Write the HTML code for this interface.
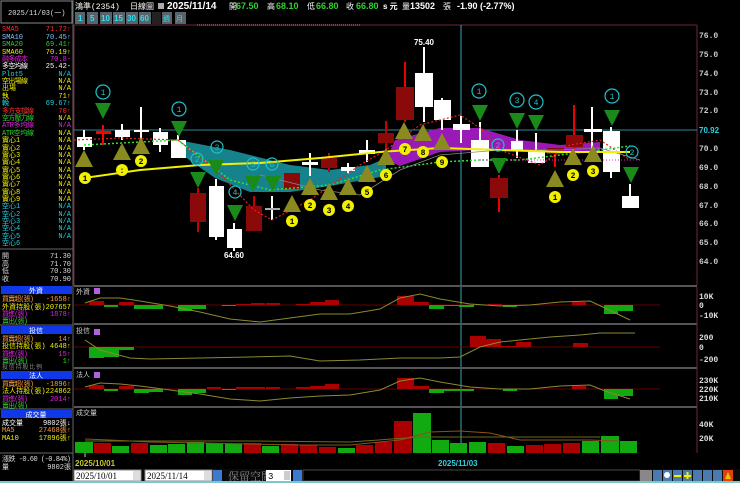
<!DOCTYPE html>
<html><head><meta charset="utf-8"><style>
html,body{margin:0;padding:0;background:#000;width:740px;height:483px;overflow:hidden}
svg{display:block}
text{font-family:"Liberation Mono","Noto Sans CJK TC",monospace;font-size:8px}
.b{font-family:"Liberation Sans","Noto Sans CJK TC",sans-serif;font-weight:bold}
.l text{font-size:7px}
</style></head><body>
<svg width="740" height="483" viewBox="0 0 740 483" xmlns="http://www.w3.org/2000/svg">
<rect width="740" height="483" fill="#000"/>
<!-- left panel -->
<rect x="1" y="1" width="71" height="22" fill="#000" stroke="#888" stroke-width="1"/>
<text x="8" y="15" fill="#ddd" style="font-size:7px">2025/11/03(一)</text>
<line x1="73" y1="0" x2="73" y2="483" stroke="#666"/>
<g class="l">
<text x="2" y="31" fill="#ff3030">SMA5</text><text x="71" y="31" fill="#ff3030" text-anchor="end">71.72↑</text>
<text x="2" y="39" fill="#7fc8ff">SMA10</text><text x="71" y="39" fill="#7fc8ff" text-anchor="end">70.45↑</text>
<text x="2" y="46" fill="#30d030">SMA20</text><text x="71" y="46" fill="#30d030" text-anchor="end">69.41↑</text>
<text x="2" y="54" fill="#f0f000">SMA60</text><text x="71" y="54" fill="#f0f000" text-anchor="end">70.19↑</text>
<text x="2" y="61" fill="#e020e0" textLength="26">融多成本</text><text x="71" y="61" fill="#e020e0" text-anchor="end">70.8-</text>
<text x="2" y="68" fill="#fff" textLength="26">多空均線</text><text x="71" y="68" fill="#fff" text-anchor="end">25.42-</text>
<text x="2" y="76" fill="#20d0e0">Plot5</text><text x="71" y="76" fill="#20d0e0" text-anchor="end">N/A</text>
<text x="2" y="83" fill="#f0f000" textLength="26">空出場線</text><text x="71" y="83" fill="#f0f000" text-anchor="end">N/A</text>
<text x="2" y="90" fill="#f0f000">出場</text><text x="71" y="90" fill="#f0f000" text-anchor="end">N/A</text>
<text x="2" y="98" fill="#f0f000">執</text><text x="71" y="98" fill="#f0f000" text-anchor="end">71↑</text>
<text x="2" y="105" fill="#20d0e0">輓</text><text x="71" y="105" fill="#20d0e0" text-anchor="end">69.67↑</text>
<text x="2" y="113" fill="#ff3030" textLength="32">多方支撐線</text><text x="71" y="113" fill="#ff3030" text-anchor="end">70↑</text>
<text x="2" y="120" fill="#30d030" textLength="32">空方壓力線</text><text x="71" y="120" fill="#f0f000" text-anchor="end">N/A</text>
<text x="2" y="127" fill="#e020e0" textLength="32">ATR多均線</text><text x="71" y="127" fill="#e020e0" text-anchor="end">N/A</text>
<text x="2" y="135" fill="#30d030" textLength="32">ATR空均線</text><text x="71" y="135" fill="#f0f000" text-anchor="end">N/A</text>
<text x="2" y="142" fill="#f0f000">實心1</text><text x="71" y="142" fill="#f0f000" text-anchor="end">N/A</text>
<text x="2" y="150" fill="#f0f000">實心2</text><text x="71" y="150" fill="#f0f000" text-anchor="end">N/A</text>
<text x="2" y="157" fill="#f0f000">實心3</text><text x="71" y="157" fill="#f0f000" text-anchor="end">N/A</text>
<text x="2" y="164" fill="#f0f000">實心4</text><text x="71" y="164" fill="#f0f000" text-anchor="end">N/A</text>
<text x="2" y="172" fill="#f0f000">實心5</text><text x="71" y="172" fill="#f0f000" text-anchor="end">N/A</text>
<text x="2" y="179" fill="#f0f000">實心6</text><text x="71" y="179" fill="#f0f000" text-anchor="end">N/A</text>
<text x="2" y="186" fill="#f0f000">實心7</text><text x="71" y="186" fill="#f0f000" text-anchor="end">N/A</text>
<text x="2" y="194" fill="#f0f000">實心8</text><text x="71" y="194" fill="#f0f000" text-anchor="end">N/A</text>
<text x="2" y="201" fill="#f0f000">實心9</text><text x="71" y="201" fill="#f0f000" text-anchor="end">N/A</text>
<text x="2" y="208" fill="#20d0e0">空心1</text><text x="71" y="208" fill="#20d0e0" text-anchor="end">N/A</text>
<text x="2" y="216" fill="#20d0e0">空心2</text><text x="71" y="216" fill="#20d0e0" text-anchor="end">N/A</text>
<text x="2" y="223" fill="#20d0e0">空心3</text><text x="71" y="223" fill="#20d0e0" text-anchor="end">N/A</text>
<text x="2" y="230" fill="#20d0e0">空心4</text><text x="71" y="230" fill="#20d0e0" text-anchor="end">N/A</text>
<text x="2" y="238" fill="#20d0e0">空心5</text><text x="71" y="238" fill="#20d0e0" text-anchor="end">N/A</text>
<text x="2" y="245" fill="#20d0e0">空心6</text>
<text x="2" y="258" fill="#ddd">開</text><text x="71" y="258" fill="#ddd" text-anchor="end">71.30</text>
<text x="2" y="266" fill="#ddd">高</text><text x="71" y="266" fill="#ddd" text-anchor="end">71.70</text>
<text x="2" y="273" fill="#ddd">低</text><text x="71" y="273" fill="#ddd" text-anchor="end">70.30</text>
<text x="2" y="281" fill="#ddd">收</text><text x="71" y="281" fill="#ddd" text-anchor="end">70.90</text>
</g>
<line x1="0" y1="249" x2="73" y2="249" stroke="#666"/>
<!-- left sections -->
<g class="l">
<rect x="1" y="286" width="71" height="8" fill="#1038e8"/><text x="36" y="293" fill="#fff" text-anchor="middle">外資</text>
<text x="2" y="301" fill="#ffa040" textLength="32">買賣超(張)</text><text x="71" y="301" fill="#ffa040" text-anchor="end">-1658↑</text>
<text x="2" y="309" fill="#f0f000" textLength="69">外資持股(張)207657</text>
<text x="2" y="316" fill="#e020e0" textLength="26">買進(張)</text><text x="71" y="316" fill="#e020e0" text-anchor="end">1878↑</text>
<text x="2" y="323" fill="#30d030" textLength="26">賣出(張)</text>
<rect x="1" y="326" width="71" height="8" fill="#1038e8"/><text x="36" y="333" fill="#fff" text-anchor="middle">投信</text>
<text x="2" y="341" fill="#ffa040" textLength="32">買賣超(張)</text><text x="71" y="341" fill="#ffa040" text-anchor="end">14↑</text>
<text x="2" y="348" fill="#f0f000" textLength="69">投信持股(張) 4648↑</text>
<text x="2" y="356" fill="#e020e0" textLength="26">買進(張)</text><text x="71" y="356" fill="#e020e0" text-anchor="end">15↑</text>
<text x="2" y="363" fill="#30d030" textLength="26">賣出(張)</text><text x="71" y="363" fill="#30d030" text-anchor="end">1↑</text>
<text x="2" y="369" fill="#888" textLength="40" style="font-size:6px">投信持股比例</text>
<rect x="1" y="371" width="71" height="8" fill="#1038e8"/><text x="36" y="378" fill="#fff" text-anchor="middle">法人</text>
<text x="2" y="386" fill="#ffa040" textLength="32">買賣超(張)</text><text x="71" y="386" fill="#ffa040" text-anchor="end">-1896↑</text>
<text x="2" y="393" fill="#f0f000" textLength="69">法人持股(張)224862</text>
<text x="2" y="401" fill="#e020e0" textLength="26">買進(張)</text><text x="71" y="401" fill="#e020e0" text-anchor="end">2014↑</text>
<text x="2" y="408" fill="#30d030" textLength="26">賣出(張)</text>
<rect x="1" y="410" width="71" height="8" fill="#1038e8"/><text x="36" y="417" fill="#fff" text-anchor="middle">成交量</text>
<text x="2" y="425" fill="#fff">成交量</text><text x="71" y="425" fill="#fff" text-anchor="end">9802張↓</text>
<text x="2" y="432" fill="#ffa040">MA5</text><text x="71" y="432" fill="#ffa040" text-anchor="end">27468張↑</text>
<text x="2" y="440" fill="#f0f000">MA10</text><text x="71" y="440" fill="#f0f000" text-anchor="end">17896張↑</text>
<text x="2" y="461" fill="#ddd" textLength="69">漲跌 -0.60 (-0.84%)</text>
<text x="2" y="469" fill="#ddd">量</text><text x="71" y="469" fill="#ddd" text-anchor="end">9802張</text>
</g>
<line x1="0" y1="325" x2="73" y2="325" stroke="#666"/>
<line x1="0" y1="409" x2="73" y2="409" stroke="#666"/>
<line x1="0" y1="453" x2="73" y2="453" stroke="#666"/>

<!-- header -->
<text x="75" y="9" fill="#fff">鴻準(2354)</text>
<text x="130" y="9" fill="#fff">日線圖</text>
<rect x="158" y="3" width="6" height="6" fill="#aaa"/>
<text class="b" x="167" y="9" fill="#fff" style="font-size:10px">2025/11/14</text>
<text x="229" y="9" fill="#fff">開</text><text class="b" x="236" y="9" fill="#30d030" style="font-size:9px">67.50</text>
<text x="267" y="9" fill="#fff">高</text><text class="b" x="276" y="9" fill="#30d030" style="font-size:9px">68.10</text>
<text x="307" y="9" fill="#fff">低</text><text class="b" x="316" y="9" fill="#30d030" style="font-size:9px">66.80</text>
<text x="346" y="9" fill="#fff">收</text><text class="b" x="356" y="9" fill="#30d030" style="font-size:9px">66.80</text>
<text class="b" x="383" y="9" fill="#fff" style="font-size:8px">s 元</text>
<text x="402" y="9" fill="#fff">量</text><text class="b" x="410" y="9" fill="#fff" style="font-size:9px">13502</text><text x="443" y="9" fill="#fff">張</text>
<text class="b" x="457" y="9" fill="#fff" style="font-size:9px">-1.90 (-2.77%)</text>
<!-- toolbar -->
<g fill="#56656c">
<rect x="75" y="12" width="10" height="12"/><rect x="87" y="12" width="11" height="12"/><rect x="100" y="12" width="12" height="12"/><rect x="113" y="12" width="12" height="12"/><rect x="126" y="12" width="12" height="12"/><rect x="139" y="12" width="12" height="12"/><rect x="152" y="12" width="9" height="12" fill="#222"/><rect x="162" y="12" width="10" height="12"/><rect x="175" y="12" width="11" height="12"/>
</g>
<g fill="#30e0f0" style="font-size:7px">
<text x="78" y="21" class="b">1</text><text x="90" y="21" class="b">5</text><text x="101" y="21" class="b">10</text><text x="114" y="21" class="b">15</text><text x="127" y="21" class="b">30</text><text x="140" y="21" class="b">60</text><text x="163" y="21" style="font-size:7px">週</text><text x="176" y="21" style="font-size:7px">月</text>
</g>

<!-- main chart frame -->
<line x1="74" y1="25" x2="697" y2="25" stroke="#6a2838"/>
<line x1="197" y1="25" x2="360" y2="25" stroke="#c090a0" stroke-dasharray="1 1"/>
<line x1="74" y1="25" x2="74" y2="285" stroke="#6a2838"/>
<line x1="697" y1="25" x2="697" y2="285" stroke="#6a2838"/>
<line x1="74" y1="130" x2="697" y2="130" stroke="#2a8a9a"/>
<line x1="461" y1="25" x2="461" y2="453" stroke="#3aa8b8"/>
<g fill="#ccc" class="b" style="font-size:8px">
<text x="699" y="38">76.0</text><text x="699" y="57">75.0</text><text x="699" y="76">74.0</text><text x="699" y="95">73.0</text><text x="699" y="113">72.0</text>
<text x="699" y="151">70.0</text><text x="699" y="170">69.0</text><text x="699" y="189">68.0</text><text x="699" y="208">67.0</text><text x="699" y="226">66.0</text><text x="699" y="245">65.0</text><text x="699" y="264">64.0</text>
</g>
<text x="699" y="133" class="b" fill="#30d0e0">70.92</text>

<polygon points="178,140 230,150 290,165 330,170 370,165 386,158 386,176 330,186 290,192 250,192 215,178 178,152" fill="#1a9aa4" opacity="0.85"/>
<polygon points="395,140 440,128 480,128 520,140 560,145 600,142 600,152 560,152 520,150 480,150 440,152 400,166 386,160" fill="#9a1ab8"/>

<g stroke-width="2">
<line x1="84" y1="130" x2="84" y2="150" stroke="#fff"/><rect x="77" y="137" width="15" height="10" fill="#fff"/>
<line x1="103" y1="125" x2="103" y2="145" stroke="#f00"/><rect x="96" y="131" width="15" height="3" fill="#f00"/>
<line x1="122" y1="124" x2="122" y2="140" stroke="#fff"/><rect x="115" y="130" width="15" height="7" fill="#fff"/>
<line x1="141" y1="107" x2="141" y2="140" stroke="#fff"/><rect x="134" y="130" width="15" height="2" fill="#fff"/>
<line x1="160" y1="128" x2="160" y2="152" stroke="#fff"/><rect x="153" y="132" width="15" height="13" fill="#fff"/>
<line x1="178" y1="135" x2="178" y2="158" stroke="#fff"/><rect x="171" y="140" width="15" height="18" fill="#fff"/>
<line x1="198" y1="188" x2="198" y2="232" stroke="#c00"/><rect x="190" y="193" width="16" height="29" fill="#8a0a0a"/>
<line x1="216" y1="179" x2="216" y2="240" stroke="#fff"/><rect x="209" y="186" width="15" height="51" fill="#fff"/>
<line x1="234" y1="223" x2="234" y2="251" stroke="#fff"/><rect x="227" y="229" width="15" height="19" fill="#fff"/>
<line x1="254" y1="196" x2="254" y2="231" stroke="#c00"/><rect x="246" y="206" width="16" height="25" fill="#8a0a0a"/>
<line x1="272" y1="196" x2="272" y2="220" stroke="#fff"/><rect x="265" y="208" width="15" height="2" fill="#aaa"/>
<rect x="284" y="173" width="16" height="16" fill="#8a0a0a"/>
<line x1="310" y1="153" x2="310" y2="176" stroke="#fff"/><rect x="302" y="162" width="16" height="3" fill="#fff"/>
<line x1="329" y1="153" x2="329" y2="172" stroke="#c00"/><rect x="321" y="158" width="16" height="10" fill="#8a0a0a"/>
<line x1="348" y1="163" x2="348" y2="174" stroke="#fff"/><rect x="341" y="167" width="14" height="4" fill="#fff"/>
<line x1="367" y1="140" x2="367" y2="162" stroke="#fff"/><rect x="359" y="150" width="16" height="4" fill="#fff"/>
<line x1="386" y1="121" x2="386" y2="155" stroke="#c00"/><rect x="378" y="133" width="16" height="10" fill="#8a0a0a"/>
<line x1="405" y1="62" x2="405" y2="122" stroke="#e00"/><rect x="396" y="87" width="18" height="33" fill="#8a0a0a"/>
<line x1="424" y1="47" x2="424" y2="122" stroke="#fff"/><rect x="415" y="73" width="18" height="34" fill="#fff"/>
<line x1="442" y1="98" x2="442" y2="130" stroke="#fff"/><rect x="434" y="100" width="17" height="20" fill="#fff"/>
<line x1="461" y1="116" x2="461" y2="143" stroke="#fff"/><rect x="453" y="124" width="17" height="6" fill="#fff"/>
<line x1="480" y1="122" x2="480" y2="167" stroke="#fff"/><rect x="471" y="140" width="18" height="27" fill="#fff"/>
<line x1="499" y1="175" x2="499" y2="212" stroke="#e00"/><rect x="490" y="178" width="18" height="20" fill="#8a0a0a"/>
<line x1="517" y1="130" x2="517" y2="158" stroke="#fff"/><rect x="511" y="141" width="12" height="9" fill="#fff"/>
<line x1="536" y1="133" x2="536" y2="163" stroke="#fff"/><rect x="528" y="150" width="17" height="13" fill="#fff"/>
<line x1="555" y1="148" x2="555" y2="167" stroke="#e00"/><rect x="547" y="148" width="17" height="6" fill="#8a0a0a"/>
<line x1="574" y1="105" x2="574" y2="150" stroke="#e00"/><rect x="566" y="135" width="17" height="12" fill="#8a0a0a"/>
<line x1="592" y1="107" x2="592" y2="150" stroke="#fff"/><rect x="584" y="129" width="18" height="3" fill="#fff"/>
<line x1="611" y1="127" x2="611" y2="178" stroke="#fff"/><rect x="603" y="131" width="17" height="41" fill="#fff"/>
<line x1="630" y1="184" x2="630" y2="208" stroke="#fff"/><rect x="622" y="196" width="17" height="12" fill="#fff"/>
</g>
<text x="424" y="45" fill="#fff" class="b" text-anchor="middle" style="font-size:8px">75.40</text>
<text x="234" y="258" fill="#fff" class="b" text-anchor="middle" style="font-size:8px">64.60</text>

<polyline points="84,145 140,142 178,140 230,180 270,190 330,185 380,170 440,162 480,160 520,160 560,155 600,150 630,146" fill="none" stroke="#30e030" stroke-width="1.5" stroke-dasharray="2 2"/>
<polyline points="74,140 120,138 178,140 216,170 254,210 272,220 310,200 360,165 386,150 420,125 460,115 480,128 500,150 540,165 570,145 600,140 630,160" fill="none" stroke="#e02020" stroke-width="1.2" stroke-dasharray="2 2"/>
<polyline points="260,175 320,190 360,195 400,170 440,155 500,150 560,150 600,148 640,160" fill="none" stroke="#888" stroke-width="0.8"/>
<polyline points="84,178 140,170 200,165 260,163 320,158 380,152 440,148 500,150 560,152 630,152" fill="none" stroke="#f0f000" stroke-width="2"/>
<line x1="480" y1="160" x2="640" y2="160" stroke="#e020e0" stroke-dasharray="1 2"/>

<g fill="#1a8a1a">
<polygon points="95,103 111,103 103,119"/><polygon points="171,121 187,121 179,137"/><polygon points="190,172 206,172 198,188"/><polygon points="208,160 224,160 216,176"/><polygon points="227,205 243,205 235,221"/><polygon points="245,176 261,176 253,192"/><polygon points="265,176 281,176 273,192"/><polygon points="472,105 488,105 480,121"/><polygon points="509,113 525,113 517,129"/><polygon points="528,115 544,115 536,131"/><polygon points="491,158 507,158 499,174"/><polygon points="604,110 620,110 612,126"/><polygon points="623,167 639,167 631,183"/>
</g>
<g fill="#8a8a20">
<polygon points="84,150 75,167 93,167"/><polygon points="122,143 113,160 131,160"/><polygon points="141,137 132,154 150,154"/><polygon points="292,195 283,212 301,212"/><polygon points="310,178 301,195 319,195"/><polygon points="329,183 320,200 338,200"/><polygon points="348,178 339,195 357,195"/><polygon points="367,165 358,182 376,182"/><polygon points="386,148 377,165 395,165"/><polygon points="404,122 395,139 413,139"/><polygon points="423,124 414,141 432,141"/><polygon points="442,133 433,150 451,150"/><polygon points="555,170 546,187 564,187"/><polygon points="573,148 564,165 582,165"/><polygon points="593,145 584,162 602,162"/>
</g>
<g fill="#f0f000">
<circle cx="85" cy="178" r="6"/><circle cx="122" cy="170" r="6"/><circle cx="141" cy="161" r="6"/><circle cx="292" cy="221" r="6"/><circle cx="310" cy="205" r="6"/><circle cx="329" cy="210" r="6"/><circle cx="348" cy="206" r="6"/><circle cx="367" cy="192" r="6"/><circle cx="386" cy="175" r="6"/><circle cx="405" cy="149" r="6"/><circle cx="423" cy="152" r="6"/><circle cx="442" cy="162" r="6"/><circle cx="555" cy="197" r="6"/><circle cx="573" cy="175" r="6"/><circle cx="593" cy="171" r="6"/>
</g>
<g fill="#000" class="b" text-anchor="middle" style="font-size:8px">
<text x="85" y="181">1</text><text x="122" y="173">:</text><text x="141" y="164">2</text><text x="292" y="224">1</text><text x="310" y="208">2</text><text x="329" y="213">3</text><text x="348" y="209">4</text><text x="367" y="195">5</text><text x="386" y="178">6</text><text x="405" y="152">7</text><text x="423" y="155">8</text><text x="442" y="165">9</text><text x="555" y="200">1</text><text x="573" y="178">2</text><text x="593" y="174">3</text>
</g>
<g fill="none" stroke="#20c0c8" stroke-width="1.2">
<circle cx="103" cy="92" r="7"/><circle cx="179" cy="109" r="7"/><circle cx="217" cy="147" r="6"/><circle cx="197" cy="159" r="6"/><circle cx="235" cy="192" r="6"/><circle cx="253" cy="164" r="6"/><circle cx="272" cy="164" r="6"/><circle cx="479" cy="91" r="7"/><circle cx="517" cy="100" r="7"/><circle cx="536" cy="102" r="7"/><circle cx="612" cy="96" r="7"/><circle cx="498" cy="145" r="6"/><circle cx="632" cy="152" r="6"/>
</g>
<g fill="#20c0c8" text-anchor="middle" style="font-size:8px">
<text x="103" y="95">1</text><text x="179" y="112">1</text><text x="217" y="150">3</text><text x="197" y="162">2</text><text x="235" y="195">4</text><text x="253" y="167">5</text><text x="272" y="167">6</text><text x="479" y="94">1</text><text x="517" y="103">3</text><text x="536" y="105">4</text><text x="612" y="99">1</text><text x="498" y="148">2</text><text x="632" y="155">2</text>
</g>

<g fill="#555">
<rect x="74" y="285" width="623" height="2"/><rect x="74" y="323" width="623" height="2"/><rect x="74" y="367" width="623" height="2"/><rect x="74" y="406" width="623" height="2"/>
</g>
<line x1="697" y1="287" x2="697" y2="453" stroke="#6a2838"/>
<g fill="#ddd" class="b" style="font-size:8px">
<text x="699" y="299">10K</text><text x="699" y="308">0</text><text x="699" y="318">-10K</text>
<text x="699" y="340">200</text><text x="699" y="350">0</text><text x="699" y="362">-200</text>
<text x="699" y="383">230K</text><text x="699" y="392">220K</text><text x="699" y="401">210K</text>
<text x="699" y="427">40K</text><text x="699" y="441">20K</text>
</g>
<g fill="#ccc" style="font-size:7px">
<text x="76" y="294" style="font-size:7px">外資</text><text x="76" y="333" style="font-size:7px">投信</text><text x="76" y="377" style="font-size:7px">法人</text><text x="76" y="415" style="font-size:7px">成交量</text>
</g>
<g fill="#b060e0"><rect x="94" y="288" width="6" height="6"/><rect x="94" y="329" width="6" height="6"/><rect x="94" y="372" width="6" height="6"/></g>

<line x1="74" y1="305" x2="660" y2="305" stroke="#600"/>
<g>
<rect x="89" y="301" width="15" height="4" fill="#a00"/><rect x="104" y="305" width="14" height="2" fill="#1a1"/><rect x="119" y="302" width="15" height="3" fill="#a00"/><rect x="134" y="305" width="15" height="4" fill="#1a1"/><rect x="149" y="305" width="14" height="4" fill="#1a1"/><rect x="178" y="305" width="14" height="6" fill="#1a1"/><rect x="192" y="305" width="14" height="4" fill="#1a1"/><rect x="222" y="305" width="14" height="1" fill="#1a1"/><rect x="236" y="304" width="15" height="1" fill="#a00"/><rect x="251" y="303" width="14" height="2" fill="#a00"/><rect x="266" y="303" width="14" height="2" fill="#a00"/><rect x="296" y="304" width="14" height="1" fill="#a00"/><rect x="310" y="302" width="15" height="3" fill="#a00"/><rect x="325" y="300" width="14" height="5" fill="#a00"/><rect x="397" y="296" width="17" height="9" fill="#a00"/><rect x="414" y="302" width="15" height="3" fill="#a00"/><rect x="429" y="305" width="15" height="4" fill="#1a1"/><rect x="444" y="305" width="15" height="1" fill="#1a1"/><rect x="459" y="305" width="15" height="2" fill="#1a1"/><rect x="488" y="304" width="14" height="1" fill="#a00"/><rect x="503" y="305" width="14" height="2" fill="#1a1"/><rect x="572" y="302" width="14" height="3" fill="#a00"/><rect x="604" y="305" width="14" height="9" fill="#1a1"/><rect x="618" y="305" width="15" height="6" fill="#1a1"/>
</g>
<polyline points="85,303 100,298 120,298 140,301 170,306 200,312 230,319 260,322 290,318 320,314 350,314 380,309 400,298 420,294 440,299 470,304 500,306 530,305 560,302 590,301 605,308 630,320" fill="none" stroke="#8a8a30"/>
<line x1="74" y1="347" x2="660" y2="347" stroke="#600"/>
<rect x="89" y="347" width="15" height="11" fill="#1a1"/><rect x="104" y="347" width="15" height="10" fill="#1a1"/><rect x="119" y="347" width="15" height="3" fill="#1a1"/>
<rect x="470" y="336" width="16" height="11" fill="#a00"/><rect x="486" y="339" width="15" height="8" fill="#a00"/><rect x="501" y="346" width="15" height="1" fill="#a00"/><rect x="516" y="342" width="15" height="5" fill="#a00"/><rect x="573" y="343" width="15" height="4" fill="#a00"/>
<polyline points="85,340 100,350 130,358 150,359 200,358 250,357 290,356 320,361 360,360 400,358 440,358 460,357 480,347 500,342 520,340 550,337 580,335 600,333 635,333" fill="none" stroke="#8a8a30"/>
<line x1="74" y1="389" x2="660" y2="389" stroke="#600"/>
<g>
<rect x="89" y="385" width="15" height="4" fill="#a00"/><rect x="104" y="389" width="14" height="2" fill="#1a1"/><rect x="119" y="386" width="15" height="3" fill="#a00"/><rect x="134" y="389" width="15" height="4" fill="#1a1"/><rect x="149" y="389" width="14" height="3" fill="#1a1"/><rect x="178" y="389" width="14" height="6" fill="#1a1"/><rect x="192" y="389" width="14" height="4" fill="#1a1"/><rect x="207" y="387" width="14" height="2" fill="#a00"/><rect x="222" y="389" width="14" height="1" fill="#1a1"/><rect x="236" y="387" width="15" height="2" fill="#a00"/><rect x="251" y="387" width="14" height="2" fill="#a00"/><rect x="266" y="387" width="14" height="2" fill="#a00"/><rect x="296" y="387" width="14" height="2" fill="#a00"/><rect x="310" y="386" width="15" height="3" fill="#a00"/><rect x="325" y="384" width="14" height="5" fill="#a00"/><rect x="397" y="378" width="17" height="11" fill="#a00"/><rect x="414" y="386" width="15" height="3" fill="#a00"/><rect x="429" y="389" width="15" height="4" fill="#1a1"/><rect x="444" y="389" width="15" height="2" fill="#1a1"/><rect x="459" y="389" width="15" height="2" fill="#1a1"/><rect x="503" y="389" width="14" height="2" fill="#1a1"/><rect x="572" y="386" width="14" height="3" fill="#a00"/><rect x="604" y="389" width="14" height="10" fill="#1a1"/><rect x="618" y="389" width="15" height="7" fill="#1a1"/>
</g>
<polyline points="85,387 100,383 120,384 140,386 170,390 200,394 230,399 260,401 290,398 320,396 350,395 380,390 400,381 420,378 440,382 470,387 500,389 530,389 560,386 590,385 605,391 630,399" fill="none" stroke="#8a8a30"/>
<g>
<rect x="75" y="442" width="18" height="11" fill="#1a1"/><rect x="94" y="443" width="17" height="10" fill="#a00"/><rect x="112" y="446" width="17" height="7" fill="#1a1"/><rect x="131" y="443" width="17" height="10" fill="#a00"/><rect x="150" y="445" width="17" height="8" fill="#1a1"/><rect x="168" y="444" width="17" height="9" fill="#1a1"/><rect x="187" y="442" width="17" height="11" fill="#1a1"/><rect x="206" y="443" width="17" height="10" fill="#1a1"/><rect x="225" y="444" width="17" height="9" fill="#1a1"/><rect x="244" y="443" width="17" height="10" fill="#a00"/><rect x="262" y="446" width="17" height="7" fill="#1a1"/><rect x="281" y="444" width="17" height="9" fill="#a00"/><rect x="300" y="445" width="17" height="8" fill="#a00"/><rect x="319" y="447" width="17" height="6" fill="#a00"/><rect x="338" y="448" width="17" height="5" fill="#1a1"/><rect x="356" y="445" width="17" height="8" fill="#a00"/><rect x="375" y="442" width="17" height="11" fill="#a00"/><rect x="394" y="421" width="18" height="32" fill="#a00"/><rect x="413" y="413" width="18" height="40" fill="#1a1"/><rect x="432" y="440" width="17" height="13" fill="#1a1"/><rect x="450" y="443" width="17" height="10" fill="#1a1"/><rect x="469" y="442" width="17" height="11" fill="#1a1"/><rect x="488" y="443" width="17" height="10" fill="#a00"/><rect x="507" y="446" width="17" height="7" fill="#1a1"/><rect x="526" y="445" width="17" height="8" fill="#a00"/><rect x="544" y="444" width="17" height="9" fill="#a00"/><rect x="563" y="443" width="17" height="10" fill="#a00"/><rect x="582" y="441" width="17" height="12" fill="#1a1"/><rect x="601" y="436" width="18" height="17" fill="#1a1"/><rect x="620" y="441" width="17" height="12" fill="#1a1"/>
</g>
<polyline points="85,439 110,440 150,442 200,443 250,444 300,445 350,445 400,440 430,432 460,431 490,433 520,440 560,440 590,440 620,441" fill="none" stroke="#8a5020"/>
<polyline points="85,441 150,441 250,441 350,442 420,437 500,437 600,437" fill="none" stroke="#6a6a20"/>
<line x1="85" y1="453" x2="85" y2="457" stroke="#ccc"/>
<text x="75" y="466" fill="#c8c830" class="b" style="font-size:8px">2025/10/01</text>
<text x="438" y="466" fill="#30d0e0" class="b" style="font-size:8px">2025/11/03</text>
<rect x="73" y="469" width="667" height="13" fill="#0a0a0a"/>
<rect x="74" y="470" width="67" height="11" fill="#fff" stroke="#888"/>
<text x="76" y="479" fill="#000" style="font-size:9px;font-family:'Liberation Serif',serif">2025/10/01</text>
<rect x="133" y="471" width="7" height="9" fill="#ddd"/>
<text x="144" y="479" fill="#ccc">~</text>
<rect x="145" y="470" width="67" height="11" fill="#fff" stroke="#888"/>
<text x="147" y="479" fill="#000" style="font-size:9px;font-family:'Liberation Serif',serif">2025/11/14</text>
<rect x="204" y="471" width="7" height="9" fill="#ddd"/>
<rect x="213" y="470" width="9" height="11" fill="#3a7ad0"/>
<text x="228" y="480" fill="#888" style="font-size:11px;font-family:'Liberation Serif','Noto Serif CJK SC',serif">保留空間</text>
<rect x="266" y="470" width="25" height="11" fill="#fff"/>
<text x="268" y="479" fill="#000" style="font-size:9px">3</text>
<rect x="284" y="471" width="6" height="9" fill="#ccc"/>
<rect x="293" y="470" width="9" height="11" fill="#3a7ad0"/>
<rect x="303" y="470" width="337" height="11" fill="#000" stroke="#444"/>
<rect x="640" y="470" width="12" height="11" fill="#888"/>
<rect x="653" y="470" width="9" height="11" fill="#4a7ab0"/><rect x="663" y="470" width="9" height="11" fill="#4a7ab0"/><circle cx="667" cy="475" r="3" fill="#fff"/>
<rect x="673" y="470" width="9" height="11" fill="#4a7ab0"/><rect x="674" y="475" width="7" height="2" fill="#f0f000"/>
<rect x="683" y="470" width="9" height="11" fill="#4a7ab0"/><rect x="684" y="475" width="7" height="2" fill="#f0f000"/><rect x="686.5" y="472" width="2" height="7" fill="#f0f000"/>
<rect x="693" y="470" width="9" height="11" fill="#4a7ab0"/><rect x="703" y="470" width="9" height="11" fill="#4a7ab0"/><rect x="713" y="470" width="9" height="11" fill="#4a7ab0"/>
<rect x="723" y="470" width="10" height="11" fill="#e04010"/><polygon points="728,472 725,479 731,479" fill="#f0c000"/>
<rect x="0" y="481" width="740" height="2" fill="#7ac8c8"/>
</svg>
</body></html>
